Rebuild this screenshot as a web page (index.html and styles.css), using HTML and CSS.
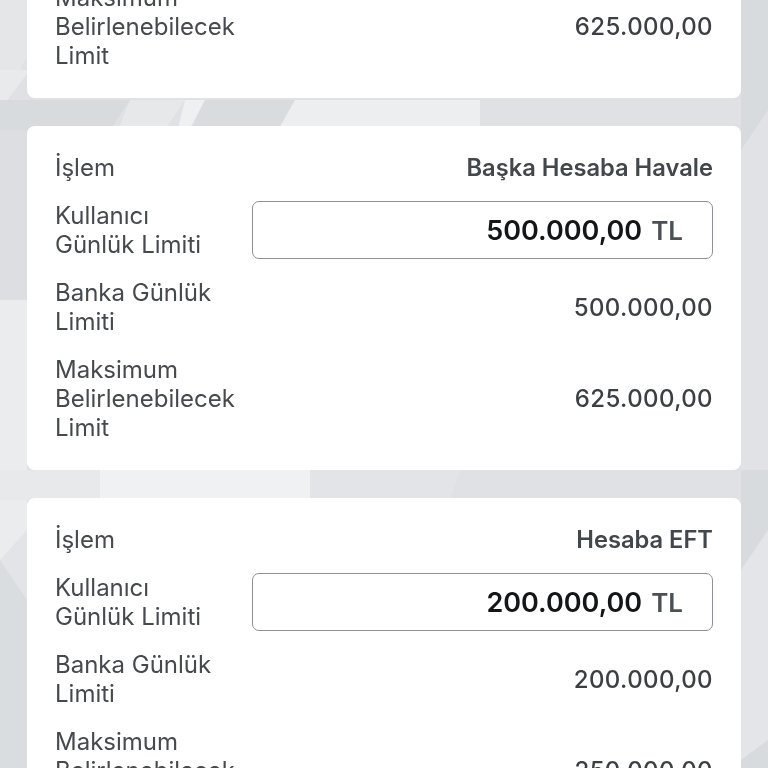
FILE: index.html
```html
<!DOCTYPE html>
<html lang="tr">
<head>
<meta charset="utf-8">
<title>Limitler</title>
<link rel="stylesheet" href="styles.css">
</head>
<body>
<svg class="bg" viewBox="0 0 768 768" preserveAspectRatio="none" aria-hidden="true">
  <rect x="0" y="0" width="768" height="768" fill="#dfe1e4"/>
  <polygon points="0,0 60,0 20,70 0,70" fill="#e4e6e8"/>
  <polygon points="0,70 30,70 0,110" fill="#e8eaec"/>
  <polygon points="0,100 130,100 110,130 0,130" fill="#d8dbde"/>
  <polygon points="130,100 185,100 165,130 118,130" fill="#e6e8ea"/>
  <polygon points="185,100 205,100 190,128 178,128" fill="#eff0f2"/>
  <polygon points="205,100 295,100 280,128 192,128" fill="#d9dcdf"/>
  <polygon points="295,100 480,100 480,130 278,130" fill="#eceef0"/>
  <polygon points="0,130 27,130 27,300 0,300" fill="#dcdee1"/>
  <polygon points="0,300 27,300 27,560 0,560" fill="#eaecee"/>
  <polygon points="0,470 100,470 100,500 0,500" fill="#e7e9eb"/>
  <polygon points="100,470 310,470 310,500 100,500" fill="#eff1f2"/>
  <polygon points="310,470 460,470 450,500 310,500" fill="#e2e4e7"/>
  <polygon points="0,560 27,530 27,768 0,768" fill="#e2e4e7"/>
  <polygon points="0,560 27,600 27,768 0,768" fill="#dadde0"/>
  <polygon points="741,0 768,0 768,768 741,768" fill="#d8dbde"/>
  <polygon points="741,150 768,110 768,470 741,470" fill="#e0e2e5"/>
  <polygon points="741,570 768,530 768,740 741,760" fill="#e3e5e8"/>
</svg>

<main class="list">
  <section class="card">
    <div class="label">İşlem</div>
    <div class="value strong">Kendi Hesabıma Havale</div>
    <div class="label">Kullanıcı<br>Günlük Limiti</div>
    <div class="field"><span class="amount">500.000,00</span><span class="currency">TL</span></div>
    <div class="label">Banka Günlük Limiti</div>
    <div class="value">500.000,00</div>
    <div class="label">Maksimum Belirlenebilecek Limit</div>
    <div class="value">625.000,00</div>
  </section>

  <section class="card">
    <div class="label">İşlem</div>
    <div class="value strong">Başka Hesaba Havale</div>
    <div class="label">Kullanıcı<br>Günlük Limiti</div>
    <div class="field"><span class="amount">500.000,00</span><span class="currency">TL</span></div>
    <div class="label">Banka Günlük Limiti</div>
    <div class="value">500.000,00</div>
    <div class="label">Maksimum Belirlenebilecek Limit</div>
    <div class="value">625.000,00</div>
  </section>

  <section class="card">
    <div class="label">İşlem</div>
    <div class="value strong">Hesaba EFT</div>
    <div class="label">Kullanıcı<br>Günlük Limiti</div>
    <div class="field"><span class="amount">200.000,00</span><span class="currency">TL</span></div>
    <div class="label">Banka Günlük Limiti</div>
    <div class="value">200.000,00</div>
    <div class="label">Maksimum Belirlenebilecek Limit</div>
    <div class="value">250.000,00</div>
  </section>
</main>
</body>
</html>
```

FILE: styles.css
```css
html, body {
  margin: 0;
  padding: 0;
  height: 100%;
  overflow: hidden;
}

body {
  font-family: Inter, "Open Sans", "Liberation Sans", sans-serif;
  background: #dfe1e4;
}

.bg {
  position: fixed;
  left: 0;
  top: 0;
  width: 100%;
  height: 100%;
  z-index: -1;
}

.list {
  display: flex;
  flex-direction: column;
  gap: 28px;
  padding: 0 27px;
  margin-top: -246px;
}

.card {
  background: #ffffff;
  border-radius: 8px;
  padding: 27px 28px 28px;
  display: grid;
  grid-template-columns: 197px 1fr;
  row-gap: 19px;
  align-items: center;
}

.label {
  font-size: 24px;
  line-height: 29px;
  color: #46494d;
  padding-right: 8px;
}

.value {
  font-size: 24px;
  line-height: 29px;
  color: #3c4044;
  font-weight: 500;
  text-align: right;
  letter-spacing: 0.4px;
}

.value.strong {
  font-weight: 600;
  font-size: 23.7px;
  letter-spacing: 0;
  color: #42474c;
}

.field {
  height: 58px;
  box-sizing: border-box;
  border: 1.5px solid #8e9296;
  border-radius: 7px;
  display: flex;
  justify-content: flex-end;
  align-items: center;
  gap: 9px;
  padding-right: 29px;
}

.amount {
  font-size: 27px;
  font-weight: 600;
  color: #141516;
}

.currency {
  font-size: 26px;
  font-weight: 600;
  color: #4b5055;
}
```
